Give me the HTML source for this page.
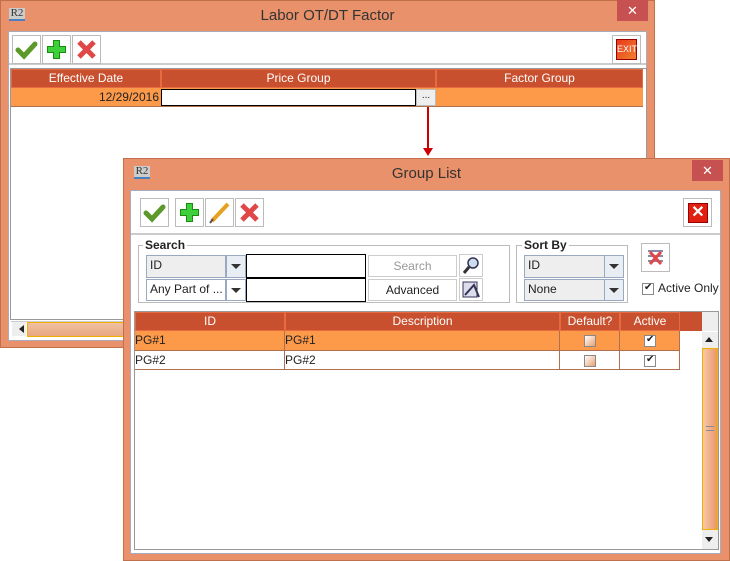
<!DOCTYPE html>
<html><head><style>
*{box-sizing:border-box;margin:0;padding:0}
body{width:730px;height:561px;background:#fff;position:relative;overflow:hidden;font-family:"Liberation Sans",sans-serif;font-size:12px;color:#222}
.a{position:absolute}
.win{background:#E8916A;border:1px solid #C0704A}
.title{font-size:15px;color:#333;text-align:center}
.close{background:#C75050;color:#fff;text-align:center;font-size:13px;line-height:21px}
.panel{background:#fff;border:1px solid #aab}
.tb{border:1px solid #bbb;background:#fff}
.hd{background:#C9502F;color:#fff;text-align:center;border:1px solid #E86A40;font-size:12px;line-height:17px}
.cell{font-size:12px;line-height:18px;border-right:1px solid #B07050;border-bottom:1px solid #B07050}
.org{background:#FD9A4A}
.combo{background:#EEE;border:1px solid #99AAC0;font-size:12px;line-height:19px;padding-left:3px}
.dd{background:#E8EEF4;border:1px solid #99AAC0}
.dd:after{content:"";position:absolute;left:4px;top:8px;border:5px solid transparent;border-top:5px solid #333}
.chk{width:12px;height:12px;border:1px solid #888;background:linear-gradient(135deg,#fff,#E8A070)}
.r2{font-family:"Liberation Serif",serif;font-size:11px;background:#ccc;color:#333;border-bottom:2px solid #4a7fc0;width:16px;height:13px;line-height:11px;text-align:center}
</style></head><body>

<!-- Window 1 -->
<div class="a win" style="left:0;top:0;width:655px;height:348px"></div>
<div class="a r2" style="left:9px;top:8px">R2</div>
<div class="a title" style="left:0;top:7px;width:655px">Labor OT/DT Factor</div>
<div class="a close" style="left:617px;top:0;width:31px;height:21px">✕</div>
<div class="a panel" style="left:8px;top:31px;width:639px;height:310px"></div>
<div class="a" style="left:9px;top:32px;width:637px;height:33px;border-bottom:2px solid #ccc"></div>
<div class="a tb" style="left:12px;top:35px;width:29px;height:29px"><svg width="27" height="27"><path d="M5 14 L11 20 L22 8" stroke="#5B9A2A" stroke-width="5" fill="none" stroke-linecap="round"/></svg></div>
<div class="a tb" style="left:42px;top:35px;width:29px;height:29px"><svg width="27" height="27"><path d="M13.5 4 V23 M4 13.5 H23" stroke="#1A8A10" stroke-width="7"/><path d="M13.5 5 V22 M5 13.5 H22" stroke="#3ED03A" stroke-width="5"/></svg></div>
<div class="a tb" style="left:72px;top:35px;width:29px;height:29px"><svg width="27" height="27"><path d="M6 6 L21 21 M21 6 L6 21" stroke="#E04848" stroke-width="5"/></svg></div>
<div class="a tb" style="left:612px;top:35px;width:29px;height:29px"><div class="a" style="left:3px;top:3px;width:21px;height:21px;background:linear-gradient(135deg,#E83A1A,#F08030);border:1px solid #900;color:#fff;font-size:9px;line-height:19px;text-align:center">EXIT</div></div>
<div class="a" style="left:10px;top:68px;width:637px;height:252px;border:1px solid #999"></div>
<div class="a hd" style="left:11px;top:69px;width:150px;height:19px">Effective Date</div>
<div class="a hd" style="left:161px;top:69px;width:275px;height:19px">Price Group</div>
<div class="a hd" style="left:436px;top:69px;width:207px;height:19px">Factor Group</div>
<div class="a org" style="left:11px;top:88px;width:632px;height:19px;border-bottom:1px solid #B07050"></div>
<div class="a" style="left:11px;top:88px;width:148px;text-align:right;line-height:19px">12/29/2016</div>
<div class="a" style="left:161px;top:89px;width:255px;height:17px;background:#fff;border:1px solid #000"></div>
<div class="a" style="left:416px;top:89px;width:20px;height:17px;background:#eee;border:1px solid #bbb;font-size:10px;text-align:center;line-height:12px">...</div>
<div class="a" style="left:11px;top:321px;width:113px;height:16px;background:#fff;border-top:1px solid #ccc"></div>
<div class="a" style="left:12px;top:322px;width:14px;height:14px;background:#eee"></div>
<div class="a" style="left:15px;top:325px;border:4px solid transparent;border-right:5px solid #222"></div>
<div class="a" style="left:27px;top:322px;width:98px;height:15px;background:linear-gradient(#F0C0A0,#E8A880);border:1px solid #F0B000"></div>
<!-- arrow -->
<div class="a" style="left:427px;top:107px;width:2px;height:46px;background:#C00"></div>
<div class="a" style="left:423px;top:148px;border:4px solid transparent;border-top:8px solid #C00;border-left-width:5px;border-right-width:5px"></div>

<!-- Window 2 -->
<div class="a win" style="left:123px;top:158px;width:607px;height:403px"></div>
<div class="a r2" style="left:134px;top:166px">R2</div>
<div class="a title" style="left:123px;top:165px;width:607px">Group List</div>
<div class="a close" style="left:692px;top:160px;width:31px;height:21px">✕</div>
<div class="a panel" style="left:130px;top:190px;width:591px;height:364px"></div>
<div class="a" style="left:131px;top:191px;width:589px;height:44px;border-bottom:2px solid #ccc"></div>
<div class="a tb" style="left:140px;top:198px;width:29px;height:29px"><svg width="27" height="27"><path d="M5 14 L11 20 L22 8" stroke="#5B9A2A" stroke-width="5" fill="none" stroke-linecap="round"/></svg></div>
<div class="a tb" style="left:175px;top:198px;width:29px;height:29px"><svg width="27" height="27"><path d="M13.5 4 V23 M4 13.5 H23" stroke="#1A8A10" stroke-width="7"/><path d="M13.5 5 V22 M5 13.5 H22" stroke="#3ED03A" stroke-width="5"/></svg></div>
<div class="a tb" style="left:205px;top:198px;width:29px;height:29px"><svg width="27" height="27"><path d="M6 22 L22 5" stroke="#E8A020" stroke-width="4"/><path d="M4 24 L7 20" stroke="#555" stroke-width="2"/></svg></div>
<div class="a tb" style="left:235px;top:198px;width:29px;height:29px"><svg width="27" height="27"><path d="M6 6 L21 21 M21 6 L6 21" stroke="#E04848" stroke-width="5"/></svg></div>
<div class="a tb" style="left:683px;top:198px;width:29px;height:29px"><div class="a" style="left:4px;top:4px;width:20px;height:20px;background:#E02010;border:1px solid #900;color:#fff;font-size:16px;line-height:18px;text-align:center;font-weight:bold">✕</div></div>

<div class="a" style="left:138px;top:245px;width:372px;height:58px;border:1px solid #bbb"></div>
<div class="a" style="left:143px;top:238px;background:#fff;padding:0 2px;font-weight:bold">Search</div>
<div class="a combo" style="left:146px;top:255px;width:80px;height:23px">ID</div>
<div class="a dd" style="left:226px;top:255px;width:20px;height:23px"></div>
<div class="a combo" style="left:146px;top:279px;width:80px;height:22px;background:#fff">Any Part of ...</div>
<div class="a dd" style="left:226px;top:279px;width:20px;height:22px;background:#fff"></div>
<div class="a" style="left:246px;top:254px;width:120px;height:24px;border:1px solid #000;background:#fff"></div>
<div class="a" style="left:246px;top:278px;width:120px;height:24px;border:1px solid #000;background:#fff"></div>
<div class="a" style="left:368px;top:255px;width:89px;height:22px;border:1px solid #ccc;color:#999;text-align:center;line-height:21px">Search</div>
<div class="a" style="left:368px;top:279px;width:89px;height:22px;border:1px solid #ccc;text-align:center;line-height:21px">Advanced</div>
<div class="a" style="left:459px;top:254px;width:24px;height:23px;border:1px solid #ccc"><svg width="22" height="21"><circle cx="13" cy="8" r="5" fill="#cde" stroke="#335" stroke-width="1.5"/><path d="M9 12 L4 18" stroke="#333" stroke-width="3"/></svg></div>
<div class="a" style="left:459px;top:278px;width:24px;height:23px;border:1px solid #ccc"><svg width="22" height="21"><rect x="3" y="3" width="14" height="15" fill="#dde" stroke="#335"/><path d="M5 16 L14 6 L19 18" stroke="#335" stroke-width="2" fill="none"/></svg></div>

<div class="a" style="left:516px;top:245px;width:112px;height:58px;border:1px solid #bbb"></div>
<div class="a" style="left:522px;top:238px;background:#fff;padding:0 2px;font-weight:bold">Sort By</div>
<div class="a combo" style="left:524px;top:255px;width:81px;height:23px">ID</div>
<div class="a dd" style="left:604px;top:255px;width:20px;height:23px"></div>
<div class="a combo" style="left:524px;top:279px;width:81px;height:22px">None</div>
<div class="a dd" style="left:604px;top:279px;width:20px;height:22px"></div>
<div class="a" style="left:641px;top:243px;width:29px;height:29px;border:1px solid #bbb"><svg width="27" height="27"><path d="M6 7 H21 M6 12 H21 M6 17 H21" stroke="#88a" stroke-width="2"/><path d="M8 8 L19 20 M19 8 L8 20" stroke="#E04848" stroke-width="3"/></svg></div>
<div class="a chk" style="left:642px;top:283px;background:#fff"></div>
<div class="a" style="left:644px;top:282px;font-size:10px">✔</div>
<div class="a" style="left:658px;top:281px">Active Only</div>

<div class="a" style="left:134px;top:311px;width:585px;height:239px;border:1px solid #999"></div>
<div class="a hd" style="left:135px;top:312px;width:150px;height:19px">ID</div>
<div class="a hd" style="left:285px;top:312px;width:275px;height:19px">Description</div>
<div class="a hd" style="left:560px;top:312px;width:60px;height:19px">Default?</div>
<div class="a hd" style="left:620px;top:312px;width:60px;height:19px">Active</div>
<div class="a" style="left:680px;top:312px;width:22px;height:19px;background:#C9502F"></div>
<div class="a" style="left:702px;top:312px;width:16px;height:19px;background:#eee"></div>
<div class="a org" style="left:135px;top:331px;width:545px;height:20px"></div>
<div class="a cell" style="left:135px;top:331px;width:150px;height:20px">PG#1</div>
<div class="a cell" style="left:285px;top:331px;width:275px;height:20px">PG#1</div>
<div class="a cell" style="left:560px;top:331px;width:60px;height:20px"></div>
<div class="a cell" style="left:620px;top:331px;width:60px;height:20px"></div>
<div class="a cell" style="left:135px;top:351px;width:150px;height:19px">PG#2</div>
<div class="a cell" style="left:285px;top:351px;width:275px;height:19px">PG#2</div>
<div class="a cell" style="left:560px;top:351px;width:60px;height:19px"></div>
<div class="a cell" style="left:620px;top:351px;width:60px;height:19px"></div>
<div class="a chk" style="left:584px;top:335px"></div>
<div class="a chk" style="left:584px;top:355px"></div>
<div class="a chk" style="left:644px;top:335px;background:#fff"></div><div class="a" style="left:646px;top:334px;font-size:10px">✔</div>
<div class="a chk" style="left:644px;top:355px;background:#fff"></div><div class="a" style="left:646px;top:354px;font-size:10px">✔</div>
<div class="a" style="left:702px;top:332px;width:16px;height:217px;background:#eee"></div>
<div class="a" style="left:705px;top:337px;border:4px solid transparent;border-bottom:5px solid #222;border-top:0"></div>
<div class="a" style="left:702px;top:348px;width:16px;height:182px;background:linear-gradient(90deg,#F8C8A8,#E89868);border:1px solid #F0B000"></div>
<div class="a" style="left:706px;top:426px;width:8px;height:5px;border-top:1px solid #889;border-bottom:1px solid #889"></div>
<div class="a" style="left:705px;top:537px;border:4px solid transparent;border-top:5px solid #222;border-bottom:0"></div>
</body></html>
